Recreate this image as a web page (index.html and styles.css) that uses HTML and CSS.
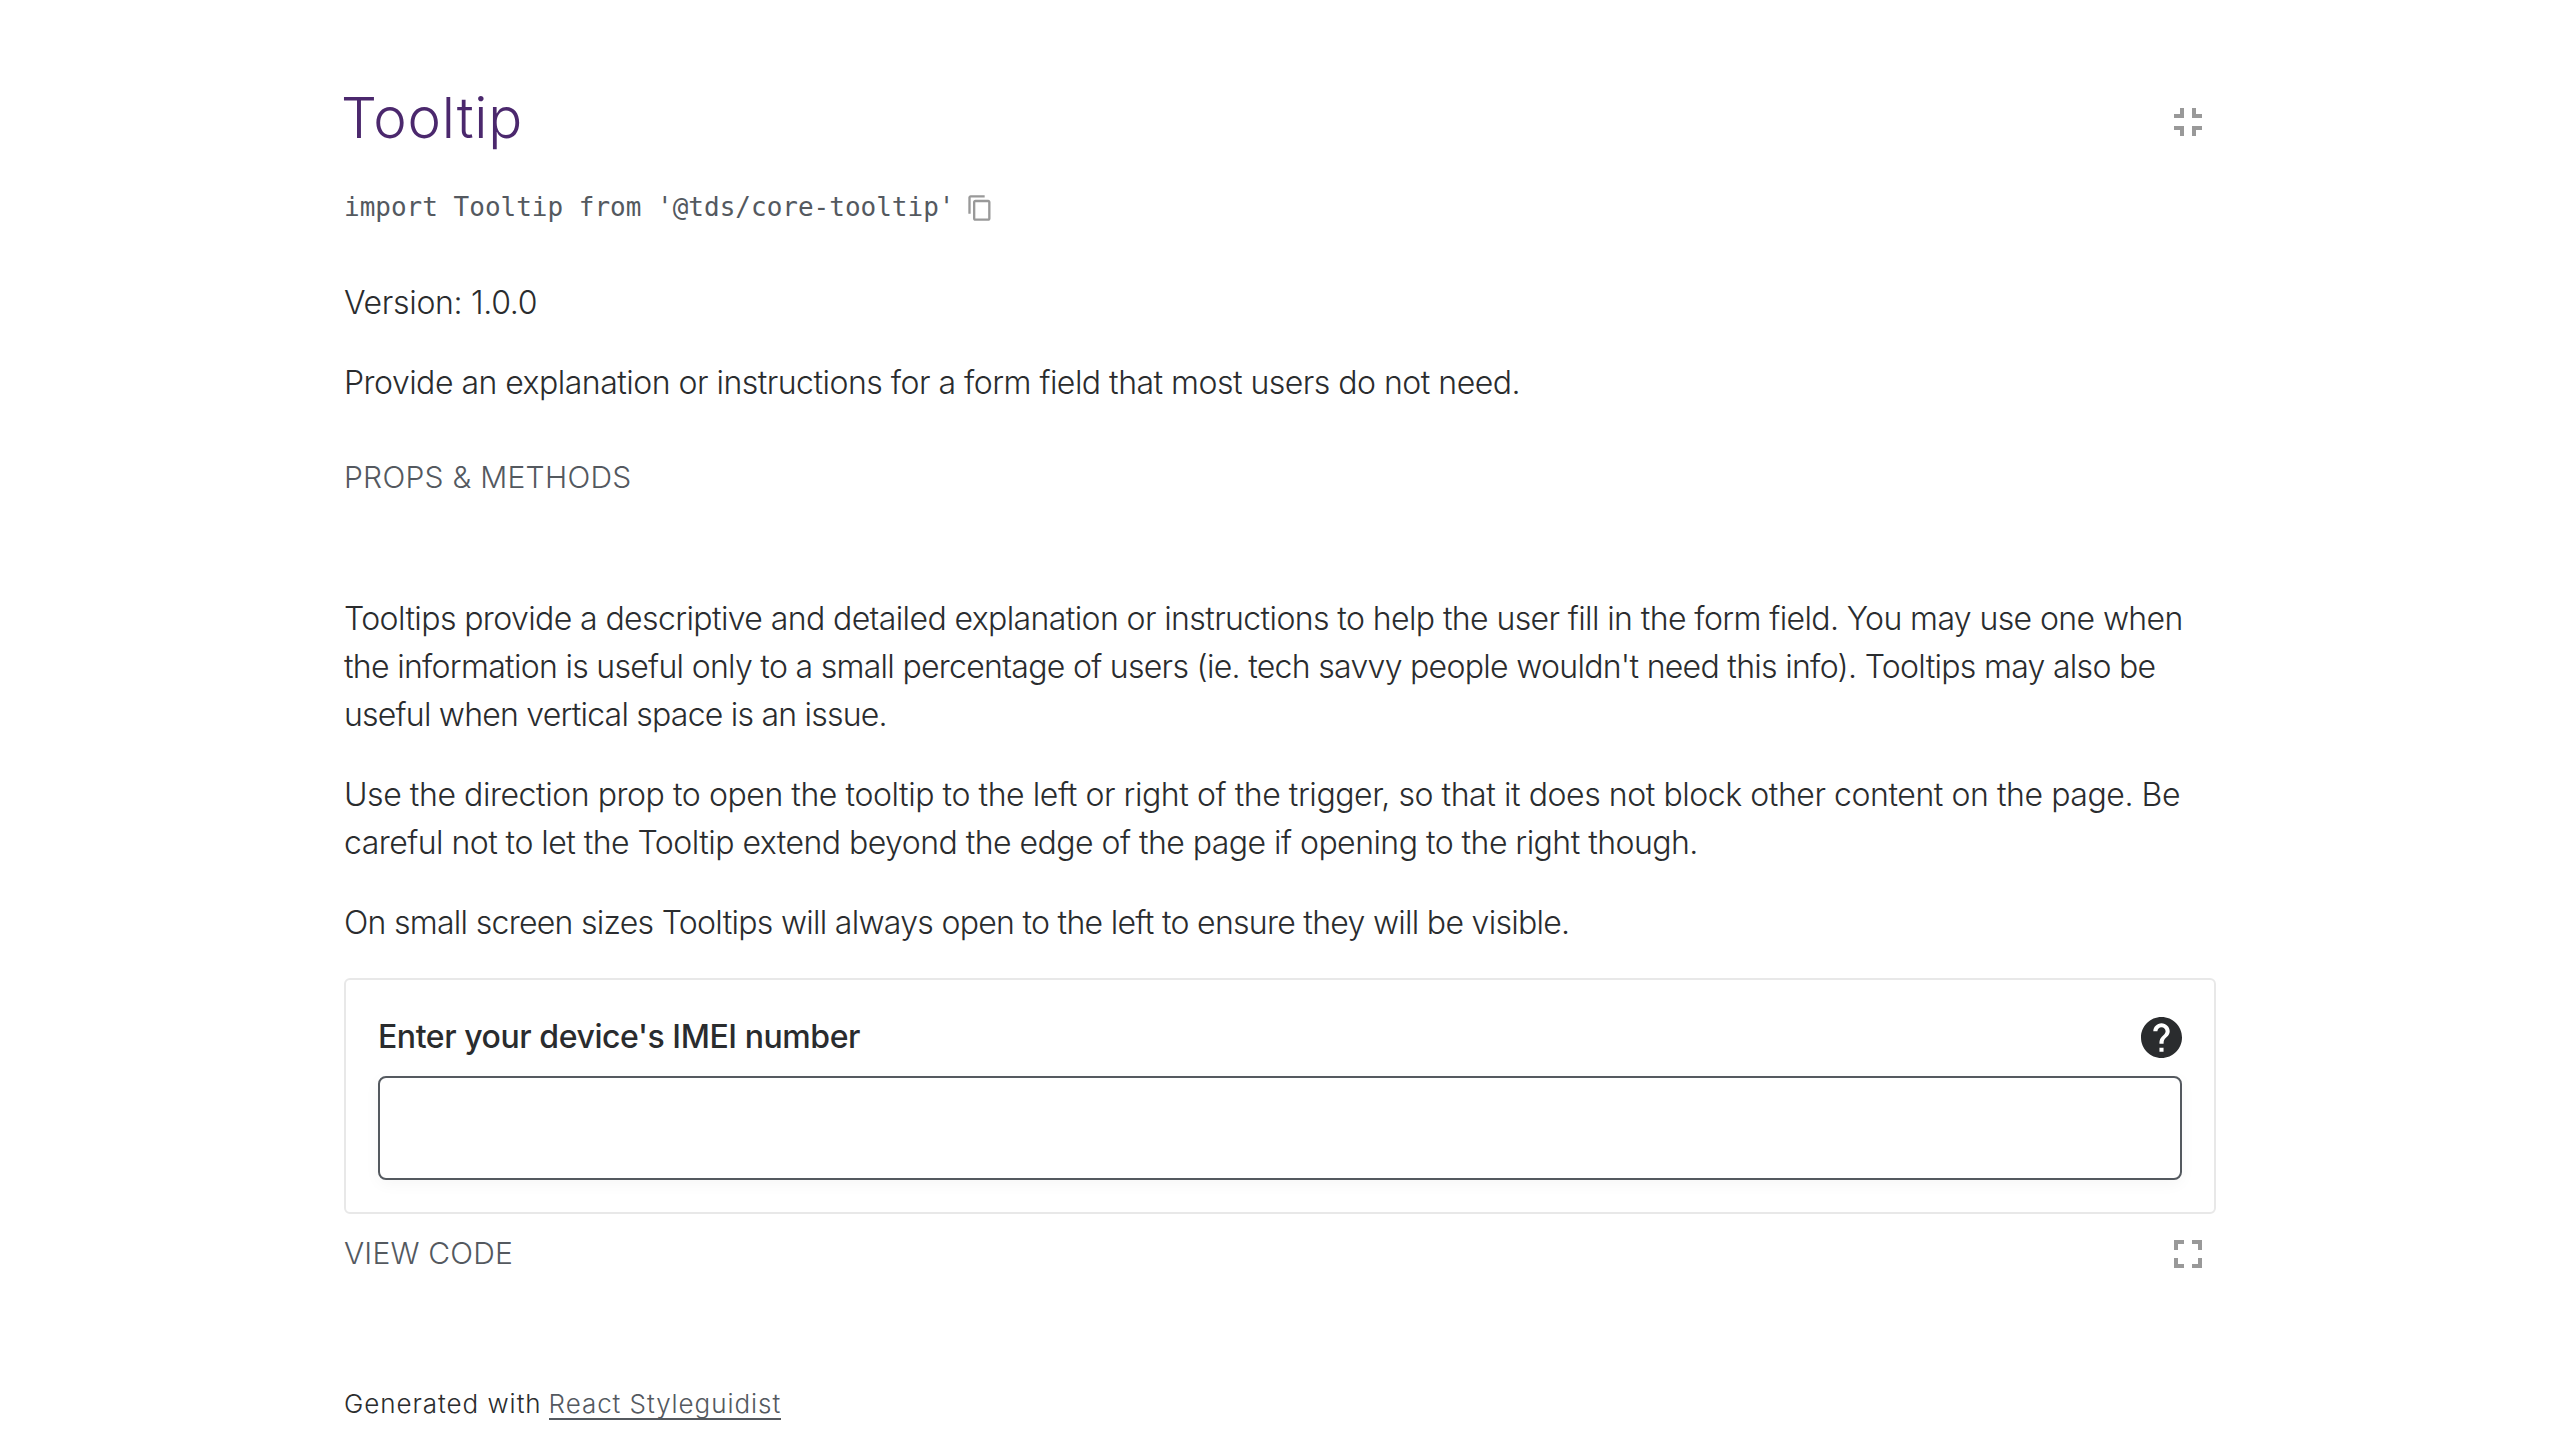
FILE: index.html
```html
<!DOCTYPE html>
<html lang="en">
<head>
<meta charset="utf-8">
<title>Tooltip</title>
<link rel="stylesheet" href="styles.css">
</head>
<body>
<main class="page">
  <header class="header">
    <h1 class="title">Tooltip</h1>
    <svg class="icon" viewBox="0 0 24 24"><path d="M5 16h3v3h2v-5H5v2zm3-8H5v2h5V5H8v3zm6 11h2v-3h3v-2h-5v5zm2-11V5h-2v5h5V8h-3z"/></svg>
  </header>
  <div class="import">
    <code class="code">import Tooltip from '@tds/core-tooltip'</code>
    <svg class="copy" viewBox="0 0 24 24"><path d="M16 1H4c-1.1 0-2 .9-2 2v14h2V3h12V1zm3 4H8c-1.1 0-2 .9-2 2v14c0 1.1.9 2 2 2h11c1.1 0 2-.9 2-2V7c0-1.1-.9-2-2-2zm0 16H8V7h11v14z"/></svg>
  </div>
  <p class="text version">Version: 1.0.0</p>
  <p class="text summary">Provide an explanation or instructions for a form field that most users do not need.</p>
  <div class="toggle props">PROPS &amp; METHODS</div>
  <section class="docs">
    <p class="text">
      <span class="line l1">Tooltips provide a descriptive and detailed explanation or instructions to help the user fill in the form field. You may use one when</span>
      <span class="line l2">the information is useful only to a small percentage of users (ie. tech savvy people wouldn't need this info). Tooltips may also be</span>
      <span class="line l3">useful when vertical space is an issue.</span>
    </p>
    <p class="text">
      <span class="line l4">Use the direction prop to open the tooltip to the left or right of the trigger, so that it does not block other content on the page. Be</span>
      <span class="line l5">careful not to let the Tooltip extend beyond the edge of the page if opening to the right though.</span>
    </p>
    <p class="text l6">On small screen sizes Tooltips will always open to the left to ensure they will be visible.</p>
  </section>
  <section class="preview">
    <div class="field-head">
      <label class="label" for="imei">Enter your device's IMEI number</label>
      <svg class="help" viewBox="2 2 20 20"><path d="M12 2C6.48 2 2 6.48 2 12s4.480 10 10 10 10-4.480 10-10S17.520 2 12 2zm1 17h-2v-2h2v2zm2.070-7.750l-.9.920C13.450 12.900 13 13.500 13 15h-2v-.5c0-1.100.450-2.100 1.170-2.830l1.240-1.260c.370-.360.590-.860.590-1.410 0-1.100-.9-2-2-2s-2 .9-2 2H8c0-2.210 1.790-4 4-4s4 1.790 4 4c0 .880-.360 1.680-.930 2.250z"/></svg>
    </div>
    <input class="input" id="imei" type="text">
  </section>
  <div class="actions">
    <div class="toggle view">VIEW CODE</div>
    <svg class="icon" viewBox="0 0 24 24"><path d="M7 14H5v5h5v-2H7v-3zm-2-4h2V7h3V5H5v5zm12 7h-3v2h5v-5h-2v3zM14 5v2h3v3h2V5h-5z"/></svg>
  </div>
  <footer class="footer"><span>Generated with</span><a class="link">React Styleguidist</a></footer>
</main>
</body>
</html>
```
FILE: styles.css
```css
* { box-sizing: border-box; }
body {
  margin: 0;
  background: #fff;
  color: #2a2c2e;
  font-family: Inter, "Liberation Sans", sans-serif;
  font-weight: 300;
  overflow: hidden;
}
.page { width: 1872px; height: 1456px; margin: 0 auto; padding-top: 86px; }
p, h1 { margin: 0; }
svg { display: block; flex: none; }
.header, .actions { display: flex; align-items: center; justify-content: space-between; padding-right: 4px; }
.header { height: 72px; align-items: flex-start; }
.title { color: #4b286d; font-size: 56.5px; font-weight: 300; line-height: 63px; letter-spacing: .75px; margin-left: -3px; }
.icon { width: 48px; height: 48px; fill: #999; }
.header .icon { margin-top: 12px; }
.import { display: flex; align-items: center; height: 40px; margin-top: 29px; }
.code { font: 400 26px/40px "DejaVu Sans Mono", monospace; color: #54595f; }
.copy { width: 28px; height: 28px; margin-left: 12px; margin-top: 2px; fill: #999; }
.text { font-size: 32px; line-height: 48px; white-space: nowrap; }
.version { margin-top: 52px; letter-spacing: -.31px; }
.summary { margin-top: 32px; letter-spacing: -.51px; }
.toggle { font-size: 30px; line-height: 48px; color: #54595f; }
.props { margin-top: 46px; letter-spacing: .27px; }
.docs { display: flex; flex-direction: column; gap: 32px; margin-top: 94px; }
.line { display: block; }
.l1 { letter-spacing: -.602px; }
.l2 { letter-spacing: -.7px; }
.l3 { letter-spacing: -.772px; }
.l4 { letter-spacing: -.435px; }
.l5 { letter-spacing: -.53px; }
.l6 { letter-spacing: -.71px; }
.preview { margin-top: 31px; padding: 33px 32px 32px; border: 2px solid #e8e8e8; border-radius: 6px; }
.field-head { display: flex; align-items: center; justify-content: space-between; height: 48px; }
.label { font-size: 32px; line-height: 48px; font-weight: 500; letter-spacing: -.431px; }
.help { width: 41px; height: 41px; margin-top: 1px; fill: #2a2c2e; }
.input {
  display: block;
  width: 100%;
  height: 104px;
  margin-top: 15px;
  padding: 0 32px;
  border: 2px solid #54595f;
  border-radius: 8px;
  background: #fff;
  box-shadow: 0 4px 16px rgba(0, 0, 0, .04);
  font: inherit;
}
.actions { margin-top: 16px; height: 48px; margin-bottom: 106px; padding-right: 4px; }
.view { letter-spacing: .171px; margin-top: -2px; }
.footer { display: flex; gap: 7px; font-size: 26px; line-height: 40px; letter-spacing: .95px; }
.link { height: 36px; overflow: hidden; border-bottom: 2px solid #54595f; color: #54595f; letter-spacing: .93px; }
```
